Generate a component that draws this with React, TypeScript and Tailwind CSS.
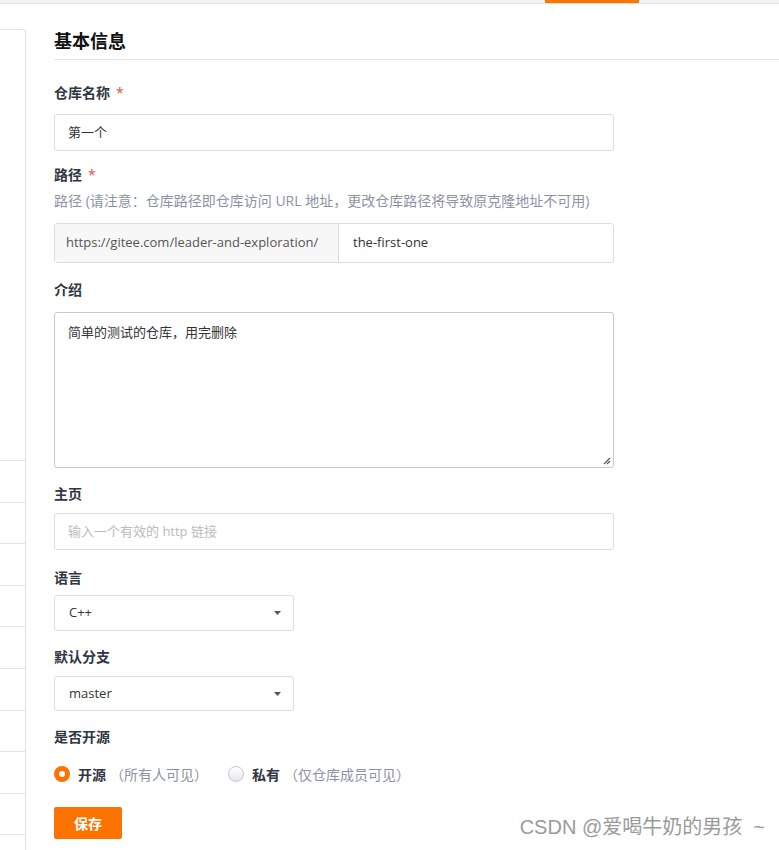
import { useState } from 'react';

const font = { fontFamily: '"Open Sans", "Noto Sans CJK SC", sans-serif' };

function Label({ text, required }: { text: string; required?: boolean }) {
  return (
    <div className="flex items-center h-[20px] text-[14px] font-bold text-[#303643]">
      {text}
      {required && <span className="ml-[6px] text-[#e74c3c] font-normal">*</span>}
    </div>
  );
}

function Caret() {
  return (
    <svg width="7" height="4" viewBox="0 0 7 4" className="fill-[#555]">
      <path d="M0 0 L7 0 L3.5 4 Z" />
    </svg>
  );
}

function Radio({ checked }: { checked: boolean }) {
  return (
    <span
      className={
        checked
          ? 'w-[16px] h-[16px] rounded-full border-[5px] border-[#fe7300] bg-white'
          : 'w-[16px] h-[16px] rounded-full border border-[#c8c8d0] bg-gradient-to-b from-white to-[#e6e6ec]'
      }
    />
  );
}

export default function App() {
  const [open, setOpen] = useState(true);

  return (
    <div className="relative w-[779px] h-[850px] bg-white overflow-hidden" style={font}>
      {/* Top tab strip */}
      <div className="h-[4px] bg-[#f2f2f2] border-b border-[#e3e3e3] flex">
        <div className="ml-[545px] w-[94px] h-[3px] bg-[#fe7300]" />
      </div>

      <div className="flex">
        {/* Sidebar */}
        <div className="w-[26px] mt-[25px] h-[830px] border-r border-t border-[#e3e3e3] rounded-tr-[4px] flex flex-col overflow-hidden">
          <div className="h-[430px] shrink-0" />
          {Array.from({ length: 10 }).map((_, i) => (
            <div key={i} className="h-[41.6px] shrink-0 border-t border-[#e3e3e3]" />
          ))}
        </div>

        {/* Main */}
        <div className="flex-1 pl-[28px]">
          <div className="mt-[26px] h-[30px] border-b border-[#e3e3e3] pb-[8px] text-[18px] font-bold text-[#111] leading-[22px]">
            基本信息
          </div>

          <div className="w-[560px]">
            <div className="mt-[22px]">
              <Label text="仓库名称" required />
            </div>
            <div className="mt-[12px] h-[37px] border border-[#dcdde4] rounded-[3px] flex items-center px-[13px] text-[13px] text-[#333]">
              第一个
            </div>

            <div className="mt-[13px]">
              <Label text="路径" required />
            </div>
            <div className="mt-[8px] text-[14px] text-[#8c92a4] leading-[18px] whitespace-nowrap">
              路径 (请注意：仓库路径即仓库访问 URL 地址，更改仓库路径将导致原克隆地址不可用)
            </div>
            <div className="mt-[13px] h-[40px] border border-[#dcdde4] rounded-[3px] flex text-[13px]">
              <div className="w-[284px] bg-[#f7f7f7] border-r border-[#dcdde4] flex items-center px-[11px] text-[#555]">
                https://gitee.com/leader-and-exploration/
              </div>
              <div className="flex items-center px-[14px] text-[#333]">the-first-one</div>
            </div>

            <div className="mt-[16px]">
              <Label text="介绍" />
            </div>
            <div className="relative mt-[13px] h-[156px] border border-[#c7c8d0] rounded-[3px] px-[13px] py-[10px] text-[13px] text-[#333]">
              简单的测试的仓库，用完删除
              <svg width="8" height="8" viewBox="0 0 8 8" className="absolute right-[2px] bottom-[2px] stroke-[#555]">
                <path d="M1 7 L7 1 M4 7 L7 4" strokeWidth="1.2" />
              </svg>
            </div>

            <div className="mt-[15px]">
              <Label text="主页" />
            </div>
            <div className="mt-[10px] h-[37px] border border-[#dcdde4] rounded-[3px] flex items-center px-[13px] text-[13px] text-[#bbbbbb]">
              输入一个有效的 http 链接
            </div>

            <div className="mt-[17px]">
              <Label text="语言" />
            </div>
            <div className="mt-[8px] w-[240px] h-[36px] border border-[#dcdde4] rounded-[3px] flex items-center justify-between pl-[14px] pr-[12px] text-[13px] text-[#333]">
              <span>C++</span>
              <Caret />
            </div>

            <div className="mt-[15px]">
              <Label text="默认分支" />
            </div>
            <div className="mt-[10px] w-[240px] h-[35px] border border-[#dcdde4] rounded-[3px] flex items-center justify-between pl-[14px] pr-[12px] text-[13px] text-[#333]">
              <span>master</span>
              <Caret />
            </div>

            <div className="mt-[15px]">
              <Label text="是否开源" />
            </div>
            <div className="mt-[18px] flex items-center h-[20px] text-[14px]">
              <button className="flex items-center" onClick={() => setOpen(true)}>
                <Radio checked={open} />
                <span className="ml-[8px] font-bold text-[#303643]">开源</span>
                <span className="ml-[4px] text-[14px] text-[#8c92a4]">（所有人可见）</span>
              </button>
              <button className="ml-[20px] flex items-center" onClick={() => setOpen(false)}>
                <Radio checked={!open} />
                <span className="ml-[8px] font-bold text-[#303643]">私有</span>
                <span className="ml-[4px] text-[14px] text-[#8c92a4]">（仅仓库成员可见）</span>
              </button>
            </div>

            <button className="mt-[23px] w-[68px] h-[32px] bg-[#fe7300] rounded-[2px] text-white text-[14px] font-bold">
              保存
            </button>
          </div>
        </div>
      </div>

      {/* Watermark */}
      <div className="absolute right-[14px] bottom-[8px] text-[20px] text-[#9a9a9a]" style={{ fontFamily: '"Liberation Sans", "Noto Sans CJK SC", sans-serif' }}>
        CSDN @爱喝牛奶的男孩 &nbsp;~
      </div>
    </div>
  );
}
